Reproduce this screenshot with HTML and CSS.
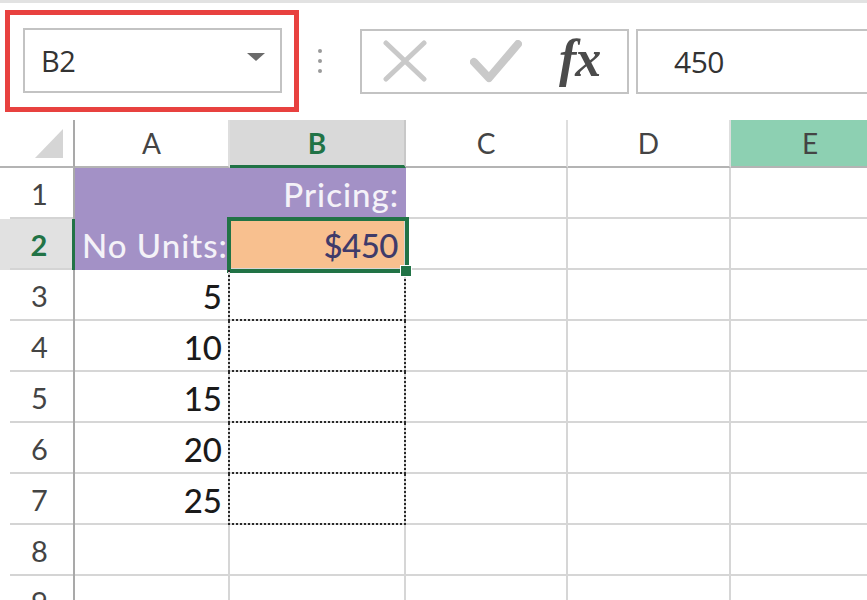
FILE: index.html
```html
<!DOCTYPE html>
<html>
<head>
<meta charset="utf-8">
<link rel="stylesheet" href="styles.css">
</head>
<body>
<div class="topline"></div>
<div class="fbar">
  <div class="highlight">
    <div class="namebox">
      <span class="name">B2</span>
      <svg class="caret" width="18" height="9" viewBox="0 0 18 9"><path d="M0 0 L18 0 L9 8 Z" fill="#6b6b6b"/></svg>
    </div>
  </div>
  <div class="dots"><i></i><i></i><i></i></div>
  <div class="buttons">
    <svg class="icon-x" width="44" height="42" viewBox="0 0 44 42"><path d="M3 3 L41 39 M41 3 L3 39" stroke="#c9c9c9" stroke-width="5" stroke-linecap="round" fill="none"/></svg>
    <svg class="icon-check" width="52" height="44" viewBox="0 0 52 44"><path d="M4 22 L19 38 L48 4" stroke="#c9c9c9" stroke-width="8" stroke-linecap="round" stroke-linejoin="round" fill="none"/></svg>
    <span class="fx">fx</span>
  </div>
  <div class="formula"><span class="fval">450</span></div>
</div>
<div class="sheet">
  <div class="hd corner"><svg width="28" height="29" viewBox="0 0 28 29"><path d="M28 0 L28 29 L0 29 Z" fill="#d5d5d5"/></svg></div>
  <div class="hd col">A</div>
  <div class="hd col sel">B</div>
  <div class="hd col">C</div>
  <div class="hd col">D</div>
  <div class="hd col hl">E</div>

  <div class="rh">1</div>
  <div class="c purple"></div>
  <div class="c purple rt light">Pricing:</div>
  <div class="c"></div><div class="c"></div><div class="c"></div>

  <div class="rh rsel">2</div>
  <div class="c purple light">No Units:</div>
  <div class="c orange rt active">$450<span class="handle"></span></div>
  <div class="c"></div><div class="c"></div><div class="c"></div>

  <div class="rh">3</div>
  <div class="c rt num">5</div>
  <div class="c ants"></div>
  <div class="c"></div><div class="c"></div><div class="c"></div>

  <div class="rh">4</div>
  <div class="c rt num">10</div>
  <div class="c ants"></div>
  <div class="c"></div><div class="c"></div><div class="c"></div>

  <div class="rh">5</div>
  <div class="c rt num">15</div>
  <div class="c ants"></div>
  <div class="c"></div><div class="c"></div><div class="c"></div>

  <div class="rh">6</div>
  <div class="c rt num">20</div>
  <div class="c ants"></div>
  <div class="c"></div><div class="c"></div><div class="c"></div>

  <div class="rh">7</div>
  <div class="c rt num">25</div>
  <div class="c ants"></div>
  <div class="c"></div><div class="c"></div><div class="c"></div>

  <div class="rh">8</div>
  <div class="c"></div><div class="c"></div><div class="c"></div><div class="c"></div><div class="c"></div>

  <div class="rh">9</div>
  <div class="c"></div><div class="c"></div><div class="c"></div><div class="c"></div><div class="c"></div>
</div>
</body>
</html>
```
FILE: styles.css
```css
* { box-sizing: border-box; }
html, body { margin: 0; padding: 0; }
body {
  width: 867px;
  height: 600px;
  overflow: hidden;
  background: #fff;
  font-family: Lato, "Open Sans", sans-serif;
  color: #333;
}
.topline { height: 3px; background: #e2e2e2; }

.fbar {
  height: 117px;
  display: flex;
  align-items: center;
  padding-top: 7px;
  padding-bottom: 8px;
}
.highlight {
  margin-left: 5px;
  width: 294px;
  height: 102px;
  border: 5px solid #e8413f;
  padding: 13px 0 0 13px;
}
.namebox {
  width: 259px;
  height: 65px;
  border: 2px solid #c3c3c3;
  display: flex;
  align-items: center;
  justify-content: space-between;
  padding: 0 15px 0 16px;
}
.name {
  font-family: "Open Sans", sans-serif;
  font-size: 29px;
  color: #333;
  letter-spacing: -0.5px;
}
.caret { margin-bottom: 6px; }
.dots {
  width: 42px;
  margin-right: 19px;
  display: flex;
  flex-direction: column;
  align-items: center;
  gap: 6px;
}
.dots i {
  display: block;
  width: 4px;
  height: 4px;
  border-radius: 50%;
  background: #9a9a9a;
}
.buttons {
  width: 269px;
  height: 65px;
  border: 2px solid #c3c3c3;
  display: flex;
  align-items: center;
  padding-left: 21px;
}
.icon-x { margin-right: 43px; }
.icon-check { margin-right: 37px; margin-top: 2px; }
.fx {
  font-family: "Liberation Serif", "DejaVu Serif", serif;
  font-style: italic;
  font-weight: 700;
  font-size: 52px;
  color: #4b4b4b;
  letter-spacing: -1px;
  line-height: 1;
  margin-top: -4px;
}
.formula {
  margin-left: 7px;
  flex: 1;
  height: 65px;
  border: 2px solid #c3c3c3;
  border-right: none;
  display: flex;
  align-items: center;
  padding-left: 36px;
}
.fval {
  font-family: "Open Sans", sans-serif;
  font-size: 30px;
  color: #333;
  letter-spacing: -0.5px;
}

.sheet {
  display: grid;
  grid-template-columns: 75px 155px 176px 162px 163px 160px;
  grid-template-rows: 48px repeat(9, 51px);
  width: 891px;
}
.hd {
  border-right: 2px solid #dedede;
  border-bottom: 2px solid #b4b4b4;
  display: flex;
  align-items: center;
  justify-content: center;
  font-size: 28px;
  color: #444;
}
.corner {
  justify-content: flex-end;
  align-items: flex-end;
  padding: 0 10px 8px 0;
  border-right: 2px solid #a9a9a9;
}
.col.sel {
  background: #d9d9d9;
  color: #217346;
  font-weight: 700;
  border-bottom: 3px solid #217346;
  border-right-color: #c8c8c8;
}
.col.hl { background: #8dd0b2; }

.rh {
  border-right: 2px solid #a9a9a9;
  display: flex;
  align-items: center;
  justify-content: center;
  padding-left: 6px;
  font-size: 29px;
  color: #444;
  background-image: linear-gradient(#d4d4d4, #d4d4d4);
  background-size: calc(100% - 10px) 2px;
  background-position: right bottom;
  background-repeat: no-repeat;
}
.rh.rsel {
  background-color: #e1e1e1;
  color: #217346;
  font-weight: 700;
  border-right: 3px solid #217346;
}
.c {
  position: relative;
  border-right: 2px solid #d6d6d6;
  border-bottom: 2px solid #d6d6d6;
  display: flex;
  align-items: center;
  padding: 2px 6px 0 7px;
  font-size: 33px;
  font-weight: 500;
  white-space: nowrap;
}
.rt { justify-content: flex-end; }
.purple { background: #a391c6; border-color: #a391c6; }
.light { color: #f4f2f8; letter-spacing: 1px; }
.rt.light { padding-right: 5px; }
.orange { background: #f8c08f; color: #3f3b6a; letter-spacing: -0.5px; }
.num { color: #1a1a1a; }
.active::after {
  content: "";
  position: absolute;
  left: -3px;
  top: -2px;
  right: -5px;
  bottom: -5px;
  border: 4px solid #217346;
}
.handle {
  position: absolute;
  right: -8px;
  bottom: -9px;
  width: 12px;
  height: 12px;
  background: #217346;
  border: 1px solid #fff;
  z-index: 2;
}
.ants::after {
  content: "";
  position: absolute;
  left: -2px;
  top: 0;
  right: -2px;
  bottom: -2px;
  border: 2px dotted #2a2a2a;
  border-top: none;
}
```
